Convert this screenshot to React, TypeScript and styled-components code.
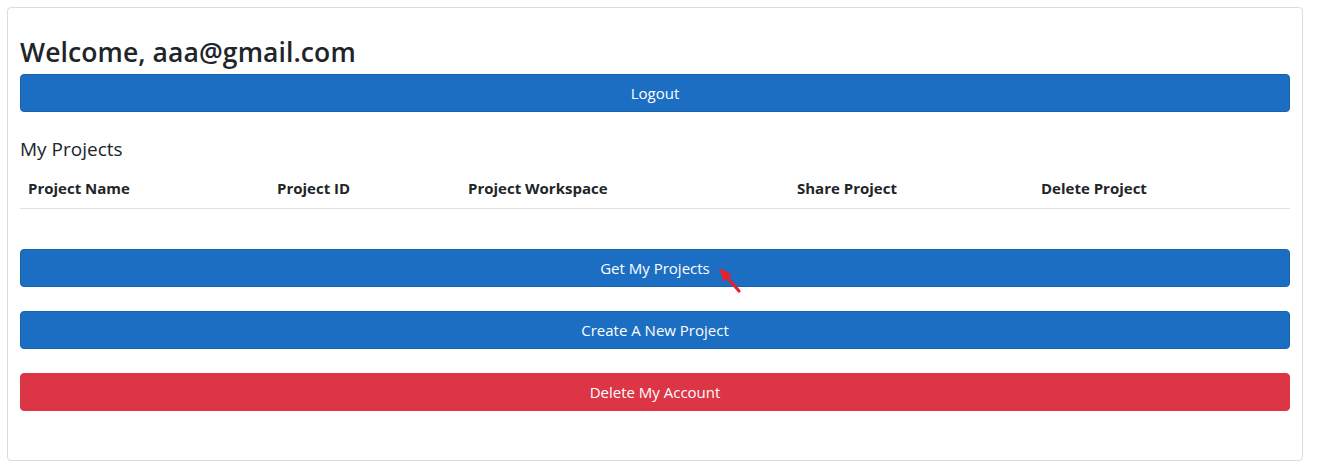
import React from 'react';
import styled, { createGlobalStyle } from 'styled-components';

const GlobalStyle = createGlobalStyle`
	html, body {
		margin: 0;
		padding: 0;
		background: #ffffff;
		font-family: 'Open Sans', 'Noto Sans', sans-serif;
		color: #212529;
	}
`;

const Page = styled.div`
	padding: 7px;
	width: 1296px;
`;

const Card = styled.div`
	position: relative;
	border: 1px solid #dcdcdc;
	border-radius: 4px;
	padding: 28px 12px 49px 12px;
	display: flex;
	flex-direction: column;
`;

const Welcome = styled.h3`
	margin: 0;
	font-size: 26.5px;
	font-weight: 600;
	line-height: 32px;
	height: 38px;
	letter-spacing: 0.1px;
`;

const Button = styled.button<{ variant?: 'primary' | 'danger' }>`
	display: block;
	width: 100%;
	height: 38px;
	border-radius: 4px;
	border: 1px solid ${(p) => (p.variant === 'danger' ? '#dc3545' : '#1861ac')};
	background-color: ${(p) => (p.variant === 'danger' ? '#dc3545' : '#1b6ec2')};
	color: #ffffff;
	font-family: 'Open Sans', 'Noto Sans', sans-serif;
	font-size: 15px;
	cursor: pointer;
`;

const SectionTitle = styled.h5`
	margin: 25px 0 8px 0;
	font-size: 19px;
	font-weight: 500;
	line-height: 24px;
`;

const Table = styled.table`
	width: 100%;
	table-layout: fixed;
	border-collapse: collapse;
	margin-bottom: 40px;

	th {
		text-align: left;
		font-size: 15px;
		font-weight: 700;
		padding: 7px 8px 8px 8px;
		line-height: 24px;
		border-bottom: 1px solid #dee2e6;
	}
`;

const ButtonStack = styled.div`
	display: flex;
	flex-direction: column;
	gap: 24px;
`;

const Pointer = styled.svg`
	position: absolute;
	left: 704px;
	top: 254px;
`;

// column widths (content box; each cell adds 16px padding)
const columns = [
	{ label: 'Project Name', width: 233 },
	{ label: 'Project ID', width: 175 },
	{ label: 'Project Workspace', width: 313 },
	{ label: 'Share Project', width: 228 },
	{ label: 'Delete Project', width: 241 },
];

export default function App() {
	return (
		<Page>
			<GlobalStyle />
			<Card>
				<Welcome>Welcome, aaa@gmail.com</Welcome>
				<Button>Logout</Button>

				<SectionTitle>My Projects</SectionTitle>
				<Table>
					<thead>
						<tr>
							{columns.map((c) => (
								<th key={c.label} style={{ width: c.width }}>
									{c.label}
								</th>
							))}
						</tr>
					</thead>
				</Table>

				<ButtonStack>
					<Button>Get My Projects</Button>
					<Button>Create A New Project</Button>
					<Button variant="danger">Delete My Account</Button>
				</ButtonStack>

				{/* red arrow annotation */}
				<Pointer width="34" height="34" viewBox="0 0 34 34">
					<path d="M14 14 L27 29" stroke="#e8202a" strokeWidth="3.2" strokeLinecap="round" />
					<path d="M7 6 L19.7 12.2 L11.5 19.4 Z" fill="#e8202a" />
				</Pointer>
			</Card>
		</Page>
	);
}
